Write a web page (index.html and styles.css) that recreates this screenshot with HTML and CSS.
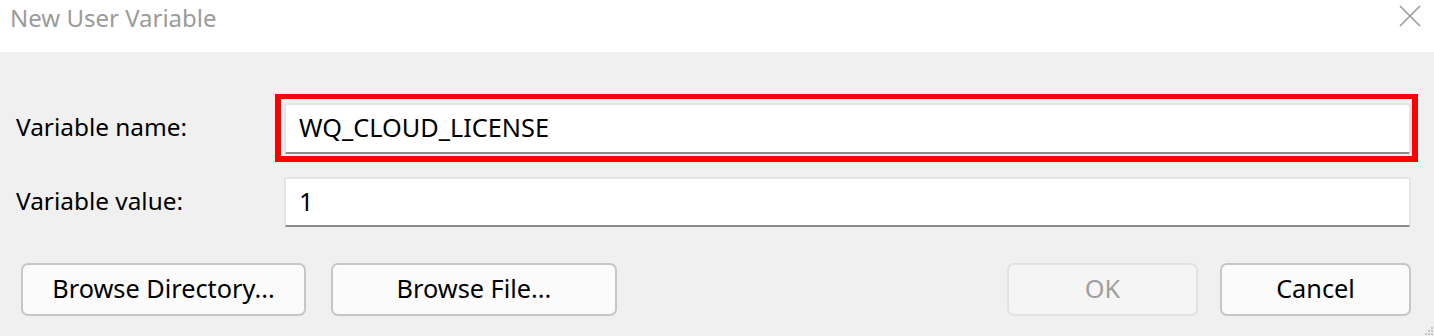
FILE: index.html
```html
<!DOCTYPE html>
<html>
<head>
<meta charset="utf-8">
<link rel="stylesheet" href="styles.css">
</head>
<body>
<div class="dialog">
  <div class="titlebar">
    <span class="title">New User Variable</span>
    <svg class="close" width="22" height="22" viewBox="0 0 22 22"><path d="M1 1L21 21M21 1L1 21" stroke="#9a9a9a" stroke-width="1.6" fill="none"/></svg>
  </div>
  <div class="content">
    <div class="fields">
      <label class="label">Variable name:</label>
      <div class="input highlighted">WQ_CLOUD_LICENSE</div>
      <label class="label">Variable value:</label>
      <div class="input second">1</div>
    </div>
    <div class="buttons">
      <div class="group">
        <button class="btn wide1">Browse Directory...</button>
        <button class="btn wide2">Browse File...</button>
      </div>
      <div class="group right">
        <button class="btn small disabled">OK</button>
        <button class="btn small">Cancel</button>
      </div>
    </div>
  </div>
  <svg class="grip" width="10" height="10" viewBox="0 0 10 10">
    <rect x="7" y="1" width="2" height="2" fill="#c4c4c4"/>
    <rect x="4" y="4" width="2" height="2" fill="#c4c4c4"/>
    <rect x="7" y="4" width="2" height="2" fill="#c4c4c4"/>
    <rect x="1" y="7" width="2" height="2" fill="#c4c4c4"/>
    <rect x="4" y="7" width="2" height="2" fill="#c4c4c4"/>
    <rect x="7" y="7" width="2" height="2" fill="#c4c4c4"/>
  </svg>
</div>
</body>
</html>
```
FILE: styles.css
```css
* { box-sizing: border-box; }
html, body { margin: 0; padding: 0; }
body {
  width: 1434px;
  height: 336px;
  overflow: hidden;
  background: #f0f0f0;
  font-family: "Noto Sans", "Open Sans", sans-serif;
  font-size: 24px;
  color: #000;
}
.dialog { position: relative; width: 1434px; height: 336px; }
.titlebar {
  height: 52px;
  background: #fff;
  display: flex;
  justify-content: space-between;
  align-items: flex-start;
  padding: 0 13px 0 10px;
}
.title {
  color: #9b9b9b;
  font-size: 24px;
  line-height: 36px;
}
.close { margin-top: 5px; }
.content { padding: 51px 23px 0 16px; }
.fields {
  display: grid;
  grid-template-columns: 268px 1fr;
  row-gap: 23px;
  align-items: center;
}
.label {
  font-size: 24.4px;
  line-height: 30px;
  padding-bottom: 3px;
}
.input {
  height: 51px;
  background: #fff;
  border: 2px solid #e4e4e4;
  border-bottom: 2px solid #8a8a8a;
  border-radius: 3px;
  padding: 0 14px 3px 13px;
  display: flex;
  align-items: center;
  font-size: 25.3px;
}
.input.second { height: 50px; }
.highlighted { position: relative; }
.highlighted::after {
  content: "";
  position: absolute;
  top: -11px;
  left: -11px;
  right: -9px;
  bottom: -10px;
  border: 6px solid #ff0000;
  border-top-width: 5px;
  pointer-events: none;
}
.buttons {
  display: flex;
  justify-content: space-between;
  margin-top: 36px;
  margin-left: 5px;
}
.group { display: flex; gap: 25px; }
.group.right { gap: 22px; }
.btn {
  height: 53px;
  background: #fbfbfb;
  border: 2px solid #c6c6c6;
  border-radius: 7px;
  font-family: inherit;
  font-size: 25.3px;
  color: #000;
  padding: 0 0 3px 0;
}
.wide1 { width: 285px; }
.wide2 { width: 286px; }
.small { width: 191px; }
.disabled {
  background: #f5f5f5;
  border-color: #e2e2e2;
  color: #a0a0a0;
}
.grip { position: absolute; right: 0; bottom: 0; }
```
